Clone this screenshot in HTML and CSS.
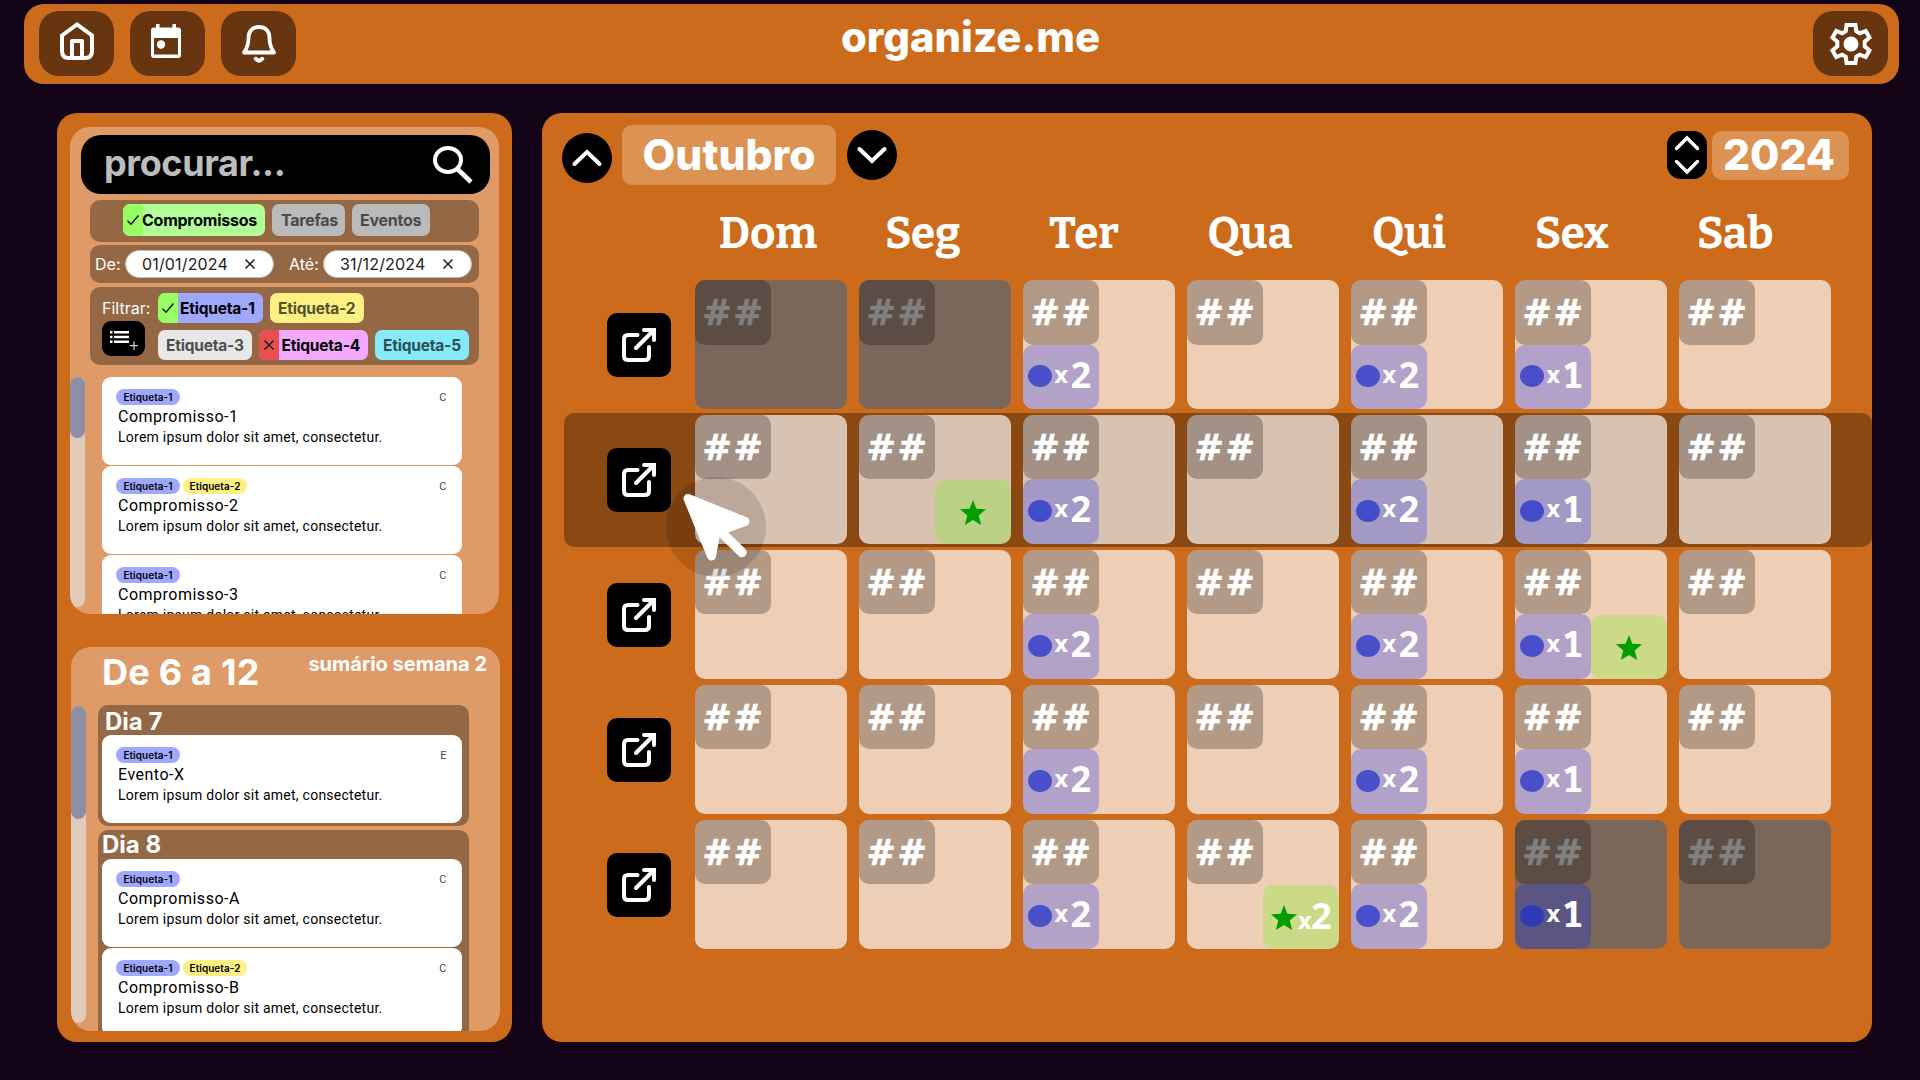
FILE: index.html
```html
<!DOCTYPE html>
<html lang="pt-BR">
<head>
<meta charset="utf-8">
<title>organize.me</title>
<link rel="stylesheet" href="styles.css">
</head>
<body>
<svg class="defs" aria-hidden="true">
  <symbol id="export" viewBox="0 0 64 64">
    <path d="M30.500 22H21Q17 22 17 26V43Q17 47 21 47H38Q42 47 42 43V34" fill="none" stroke="#fff" stroke-width="4" stroke-linecap="round" stroke-linejoin="round"/>
    <path d="M29 35L46 18" fill="none" stroke="#fff" stroke-width="4" stroke-linecap="round"/>
    <path d="M37 15H49V27Q49 29 47 29Q45 29 45 27V19H37Q35 19 35 17Q35 15 37 15Z" fill="#fff"/>
  </symbol>
  <symbol id="star" viewBox="0 0 26 25">
    <path d="M13 0L16.400 8.700L26 9.300L18.700 15.400L21.200 25L13 20L4.800 25L7.300 15.400L0 9.300L9.600 8.700Z" fill="#009e00"/>
  </symbol>
  <symbol id="check" viewBox="0 0 14 12">
    <path d="M1.500 6.800L5 10.300L12.500 1.500" fill="none" stroke="#111" stroke-width="1.400"/>
  </symbol>
  <symbol id="cross" viewBox="0 0 12 12">
    <path d="M1.500 1.500L10.500 10.500M10.500 1.500L1.500 10.500" fill="none" stroke="#1d1b20" stroke-width="1.500"/>
  </symbol>
</svg>

<header class="topbar">
  <nav class="nav">
    <button class="nav-btn" aria-label="Início"><svg width="34" height="38" viewBox="0 0 34 38"><path d="M2 13.500L17 2.500L32 13.500V29Q32 36 25 36H9Q2 36 2 29Z" fill="none" stroke="#fff" stroke-width="4"/><path d="M12 36V19H22V36" fill="none" stroke="#fff" stroke-width="4" stroke-linejoin="round"/></svg></button>
    <button class="nav-btn" aria-label="Calendário"><svg class="cal" width="30" height="34" viewBox="0 0 30 34"><path fill="#fff" fill-rule="evenodd" d="M5 0H8.500V3.500H21.500V0H25V3.500H27Q30 3.500 30 6.500V31Q30 34 27 34H3Q0 34 0 31V6.500Q0 3.500 3 3.500H5ZM3 14V30.500H27V14Z"/><circle cx="10" cy="20.500" r="4.200" fill="#fff"/></svg></button>
    <button class="nav-btn" aria-label="Notificações"><svg class="bell" width="34" height="38" viewBox="0 0 34 38"><path d="M2 27.500C6 22 6.500 18 6.500 13C6.500 6 10.500 2 17 2S27.500 6 27.500 13C27.500 18 28 22 32 27.500Z" fill="none" stroke="#fff" stroke-width="3.800" stroke-linejoin="round"/><path d="M13.800 33.800Q17 37.500 20.200 33.800" fill="none" stroke="#fff" stroke-width="4" stroke-linecap="round"/></svg></button>
  </nav>
  <h1 class="brand">organize.me</h1>
  <button class="nav-btn" aria-label="Configurações"><svg class="gear" width="42" height="42" viewBox="0 0 42 42"><path d="M16.600 2H25.400L26.300 8.300L29.800 10.300L35.700 7.900L39.500 14.500L34.700 18.700V23.300L39.500 27.500L35.700 34.100L29.800 31.700L26.300 33.700L25.400 40H16.600L15.700 33.700L12.200 31.700L6.300 34.100L2.500 27.500L7.300 23.300V18.700L2.500 14.500L6.300 7.900L12.200 10.300L15.700 8.300Z" fill="none" stroke="#fff" stroke-width="4"/><circle cx="21" cy="21" r="7.500" fill="#fff"/></svg></button>
</header>

<main class="layout">
  <aside class="sidebar">
    <section class="box search-box">
      <div class="search"><span>procurar...</span><svg width="40" height="38" viewBox="0 0 40 38"><ellipse cx="15" cy="14" rx="13" ry="12" fill="none" stroke="#fff" stroke-width="4"/><path d="M24.500 23L38 36" stroke="#fff" stroke-width="4.600"/></svg></div>
      <div class="filter types">
        <span class="chip on"><i class="mark ok"><svg width="14" height="12"><use href="#check"/></svg></i>Compromissos</span>
        <span class="chip off">Tarefas</span>
        <span class="chip off last">Eventos</span>
      </div>
      <div class="filter dates">
        <label>De:</label><span class="date">01/01/2024<svg width="12" height="12"><use href="#cross"/></svg></span>
        <label class="until">Até:</label><span class="date">31/12/2024<svg width="12" height="12"><use href="#cross"/></svg></span>
      </div>
      <div class="filter tags">
        <div class="tags-side"><label>Filtrar:</label><button class="add" aria-label="Adicionar etiqueta"><svg width="43" height="35" viewBox="0 0 43 35"><path d="M8 11.200H10.500M12 11.200H27M8 16H10.500M12 16H27M8 20.800H10.500M12 20.800H27" stroke="#fff" stroke-width="2.400"/><path d="M32 20.500V29M28 24.700H36" stroke="#ccc" stroke-width="1.300"/></svg></button></div>
        <div class="tags-list">
          <span class="chip blue"><i class="mark ok"><svg width="14" height="12"><use href="#check"/></svg></i>Etiqueta-1</span>
          <span class="chip yellow">Etiqueta-2</span>
          <span class="chip white">Etiqueta-3</span>
          <span class="chip pink"><i class="mark no"><svg width="12" height="12"><use href="#cross"/></svg></i>Etiqueta-4</span>
          <span class="chip cyan">Etiqueta-5</span>
        </div>
      </div>
      <div class="scroll results">
        <div class="track"><div class="thumb"></div></div>
        <div class="list">
          <article class="card"><div class="meta"><b class="tag t1">Etiqueta-1</b><em>C</em></div><h3>Compromisso-1</h3><p>Lorem ipsum dolor sit amet, consectetur.</p></article>
          <article class="card"><div class="meta"><b class="tag t1">Etiqueta-1</b><b class="tag t2">Etiqueta-2</b><em>C</em></div><h3>Compromisso-2</h3><p>Lorem ipsum dolor sit amet, consectetur.</p></article>
          <article class="card"><div class="meta"><b class="tag t1">Etiqueta-1</b><em>C</em></div><h3>Compromisso-3</h3><p>Lorem ipsum dolor sit amet, consectetur.</p></article>
        </div>
      </div>
    </section>

    <section class="box week-box">
      <div class="week-head"><h2>De 6 a 12</h2><span>sumário semana 2</span></div>
      <div class="scroll week">
        <div class="track"><div class="thumb"></div></div>
        <div class="days">
          <div class="day first"><h4>Dia 7</h4>
            <article class="card"><div class="meta"><b class="tag t1">Etiqueta-1</b><em>E</em></div><h3>Evento-X</h3><p>Lorem ipsum dolor sit amet, consectetur.</p></article>
          </div>
          <div class="day"><h4>Dia 8</h4>
            <article class="card"><div class="meta"><b class="tag t1">Etiqueta-1</b><em>C</em></div><h3>Compromisso-A</h3><p>Lorem ipsum dolor sit amet, consectetur.</p></article>
            <article class="card"><div class="meta"><b class="tag t1">Etiqueta-1</b><b class="tag t2">Etiqueta-2</b><em>C</em></div><h3>Compromisso-B</h3><p>Lorem ipsum dolor sit amet, consectetur.</p></article>
          </div>
        </div>
      </div>
    </section>
  </aside>

  <section class="calendar">
    <div class="cal-head">
      <button class="round up" aria-label="Mês anterior"><svg width="50" height="50" viewBox="0 0 50 50"><path d="M12.500 31L25 19L37.500 31" fill="none" stroke="#fff" stroke-width="4" stroke-linecap="round"/></svg></button>
      <div class="month">Outubro</div>
      <button class="round" aria-label="Próximo mês"><svg width="50" height="50" viewBox="0 0 50 50"><path d="M12.500 19L25 31L37.500 19" fill="none" stroke="#fff" stroke-width="4" stroke-linecap="round"/></svg></button>
      <button class="stepper" aria-label="Ano"><svg width="40" height="48" viewBox="0 0 40 48"><path d="M9.500 17.500L20 7L30.500 17.500M9.500 30.500L20 41L30.500 30.500" fill="none" stroke="#fff" stroke-width="3.400" stroke-linecap="round"/></svg></button>
      <div class="year">2024</div>
    </div>
    <div class="weekdays"><span>Dom</span><span>Seg</span><span>Ter</span><span>Qua</span><span>Qui</span><span>Sex</span><span>Sab</span></div>

    <div class="weeks">
      <div class="row">
        <button class="open" aria-label="Abrir semana 1"><svg width="64" height="64"><use href="#export"/></svg></button>
        <div class="cell out"><b class="num">##</b></div>
        <div class="cell out"><b class="num">##</b></div>
        <div class="cell"><b class="num">##</b><span class="ev"><i></i><small>x</small>2</span></div>
        <div class="cell"><b class="num">##</b></div>
        <div class="cell"><b class="num">##</b><span class="ev"><i></i><small>x</small>2</span></div>
        <div class="cell"><b class="num">##</b><span class="ev"><i></i><small>x</small>1</span></div>
        <div class="cell"><b class="num">##</b></div>
      </div>
      <div class="row current">
        <button class="open" aria-label="Abrir semana 2"><svg width="64" height="64"><use href="#export"/></svg></button>
        <div class="cell"><b class="num">##</b></div>
        <div class="cell"><b class="num">##</b><span class="fav"><svg width="26" height="25"><use href="#star"/></svg></span></div>
        <div class="cell"><b class="num">##</b><span class="ev"><i></i><small>x</small>2</span></div>
        <div class="cell"><b class="num">##</b></div>
        <div class="cell"><b class="num">##</b><span class="ev"><i></i><small>x</small>2</span></div>
        <div class="cell"><b class="num">##</b><span class="ev"><i></i><small>x</small>1</span></div>
        <div class="cell"><b class="num">##</b></div>
      </div>
      <div class="row">
        <button class="open" aria-label="Abrir semana 3"><svg width="64" height="64"><use href="#export"/></svg></button>
        <div class="cell"><b class="num">##</b></div>
        <div class="cell"><b class="num">##</b></div>
        <div class="cell"><b class="num">##</b><span class="ev"><i></i><small>x</small>2</span></div>
        <div class="cell"><b class="num">##</b></div>
        <div class="cell"><b class="num">##</b><span class="ev"><i></i><small>x</small>2</span></div>
        <div class="cell"><b class="num">##</b><span class="ev"><i></i><small>x</small>1</span><span class="fav"><svg width="26" height="25"><use href="#star"/></svg></span></div>
        <div class="cell"><b class="num">##</b></div>
      </div>
      <div class="row">
        <button class="open" aria-label="Abrir semana 4"><svg width="64" height="64"><use href="#export"/></svg></button>
        <div class="cell"><b class="num">##</b></div>
        <div class="cell"><b class="num">##</b></div>
        <div class="cell"><b class="num">##</b><span class="ev"><i></i><small>x</small>2</span></div>
        <div class="cell"><b class="num">##</b></div>
        <div class="cell"><b class="num">##</b><span class="ev"><i></i><small>x</small>2</span></div>
        <div class="cell"><b class="num">##</b><span class="ev"><i></i><small>x</small>1</span></div>
        <div class="cell"><b class="num">##</b></div>
      </div>
      <div class="row">
        <button class="open" aria-label="Abrir semana 5"><svg width="64" height="64"><use href="#export"/></svg></button>
        <div class="cell"><b class="num">##</b></div>
        <div class="cell"><b class="num">##</b></div>
        <div class="cell"><b class="num">##</b><span class="ev"><i></i><small>x</small>2</span></div>
        <div class="cell"><b class="num">##</b><span class="fav multi"><svg width="26" height="25"><use href="#star"/></svg><small>x</small>2</span></div>
        <div class="cell"><b class="num">##</b><span class="ev"><i></i><small>x</small>2</span></div>
        <div class="cell out"><b class="num">##</b><span class="ev"><i></i><small>x</small>1</span></div>
        <div class="cell out"><b class="num">##</b></div>
      </div>
    </div>
  </section>
</main>

<svg class="pointer" width="100" height="100" viewBox="0 0 100 100"><circle cx="50" cy="50" r="50" fill="#000" fill-opacity=".13"/><path d="M22 21.500L79 44.500L50 55L45.500 79Z" fill="#fff" stroke="#fff" stroke-width="9" stroke-linejoin="round"/><path d="M56 56L76 75.500" stroke="#fff" stroke-width="9.500" stroke-linecap="round"/></svg>
</body>
</html>
```
FILE: styles.css
```css
* { box-sizing: border-box; margin: 0; padding: 0; }

body {
  width: 1920px;
  height: 1080px;
  overflow: hidden;
  padding: 4px 21px 38px 24px;
  background: #120416;
  color: #fff;
  font-family: Inter, "Liberation Sans", sans-serif;
}

.defs { display: none; }
svg { display: block; flex: none; }
button { border: 0; background: none; flex: none; }

/* top bar */
.topbar {
  height: 80px;
  padding: 7px 11px 0 15px;
  display: flex;
  border-radius: 20px;
  background: #cc6b1c;
}
.nav { display: flex; gap: 16px; width: 257px; }
.nav-btn {
  width: 75px;
  height: 65px;
  display: flex;
  align-items: center;
  justify-content: center;
  border-radius: 20px;
  background: #67350f;
}
.nav-btn svg { margin-bottom: 5px; }
.nav-btn .bell { margin-bottom: 0; }
.nav-btn .cal { margin-bottom: 6px; margin-right: 3px; }
.nav-btn .gear { margin-bottom: 0; }
.brand { flex: 1; padding-right: 168px; text-align: center; font-size: 41.800px; font-weight: 800; line-height: 52px; }

.layout { display: flex; gap: 30px; margin: 29px 27px 0 33px; height: 929px; }

/* sidebar */
.sidebar {
  width: 455px;
  padding: 14px 12px 0 13px;
  border-radius: 20px;
  background: #cc6b1c;
  flex: none;
}
.box { width: 429px; overflow: hidden; border-radius: 20px; background: #de9b68; }
.search-box { height: 487px; padding-top: 8px; }
.week-box { height: 384px; margin: 33px 0 0 1px; }

.search {
  height: 59px;
  margin: 0 9px 6px 11px;
  padding: 0 17px 0 23px;
  display: flex;
  align-items: center;
  justify-content: space-between;
  border-radius: 20px;
  background: #000;
  color: #bdbdbd;
  font-size: 36px;
  font-weight: 700;
  line-height: 56px;
  letter-spacing: -.400px;
}
.search span { margin-top: -3px; }

.filter { width: 389px; margin-left: 20px; display: flex; border-radius: 10px; background: #946844; }
.types { height: 42px; padding: 4px 0 0 33px; gap: 7px; margin-bottom: 3px; }
.dates { height: 38px; padding: 5px 0 0 5px; margin-bottom: 4px; font-size: 16px; line-height: 28px; }
.tags { height: 78px; padding: 6px 0 0 12px; margin-bottom: 12px; }

.chip {
  height: 30px;
  padding: 0 8px;
  display: flex;
  border-radius: 7px;
  overflow: hidden;
  font-size: 15.500px;
  font-weight: 700;
  line-height: 31px;
  letter-spacing: -.200px;
  white-space: nowrap;
}
.types .chip { height: 32px; font-size: 16px; line-height: 33px; letter-spacing: -.250px; }
.mark { width: 20px; display: flex; align-items: center; justify-content: center; margin-left: -8px; margin-right: 2px; }
.ok { background: #97ff64; }
.no { background: #e94f4f; }
.on { width: 142px; background: #b1ff96; color: #000; }
.on .mark { margin-right: -1px; }
.off { width: 73px; padding-left: 9px; background: #bababa; color: #4a4a4a; }
.last { width: 78px; padding-left: 8px; }

.dates label { width: 30px; }
.dates .until { width: 34px; margin-left: 15px; }
.date {
  width: 149px;
  height: 28px;
  padding: 0 17px 0 16px;
  display: flex;
  align-items: center;
  justify-content: space-between;
  border: 1px solid #cabcb0;
  border-radius: 14px;
  background: #fff;
  color: #1d1b20;
  font-size: 16px;
  letter-spacing: .150px;
}

.tags-side { width: 56px; font-size: 16px; line-height: 28px; }
.tags-side label { display: block; height: 28px; line-height: 31px; }
.add { display: block; width: 43px; height: 35px; border-radius: 9px; background: #000; }
.tags-list { display: flex; flex-wrap: wrap; gap: 7px; align-content: flex-start; width: 315px; }
.blue { width: 105px; background: #9fa8ff; color: #000; }
.yellow { width: 94px; background: #fff083; color: #57522d; margin-right: 90px; }
.white { width: 94px; background: #e7e7e7; color: #4e4e4e; }
.pink { width: 109px; background: #f2a9ff; color: #000; }
.pink .mark { margin-right: 3px; }
.cyan { width: 94px; background: #85ebf9; color: #2d5055; }

/* scrolling lists */
.scroll { display: flex; }
.track { width: 15px; border-radius: 8px; background: #e0cbba; flex: none; }
.thumb { border-radius: 8px; background: #8e8ea5; }
.results { gap: 17px; }
.results .track { height: 230px; }
.results .thumb { height: 61px; }
.week .track { height: 317px; margin-top: 1px; }
.week .thumb { height: 113px; }
.list { width: 360px; }

.card { height: 88px; margin-bottom: 1px; padding: 12px 14px 0; border-radius: 9px; background: #fff; color: #000; font-family: Roboto, sans-serif; }
.meta { display: flex; gap: 3px; }
.tag { width: 64px; height: 16px; border-radius: 8px; text-align: center; font: 600 10px/17px Inter, sans-serif; letter-spacing: .050px; }
.t1 { background: #9fa8ff; }
.t2 { background: #fff083; }
.meta em { margin-left: auto; margin-right: 1px; color: #49454f; font-size: 11px; font-style: normal; line-height: 17px; height: 16px; letter-spacing: .5px; }
.card h3 { margin-left: 2px; font-size: 16px; font-weight: 400; line-height: 23px; letter-spacing: .5px; }
.card p { margin: -1px 0 0 2px; font-size: 14px; line-height: 20px; letter-spacing: .25px; white-space: nowrap; }

.week-head { height: 58px; padding: 5px 13px 0 31px; display: flex; justify-content: space-between; }
.week-head h2 { font-size: 36px; font-weight: 700; line-height: 40px; letter-spacing: .250px; }
.week-head span { font-size: 20px; font-weight: 700; line-height: 25px; }
.week { gap: 12px; }
.days { width: 371px; }
.day { margin-bottom: 4px; padding: 0 7px 2px 4px; border-radius: 10px; background: #946844; }
.day h4 { height: 29px; font-size: 24px; font-weight: 700; line-height: 29px; }
.first h4 { height: 30px; line-height: 33px; padding-left: 3px; }

/* calendar */
.calendar { width: 1330px; border-radius: 20px; background: #cc6b1c; flex: none; }
.cal-head { height: 72px; padding: 12px 23px 0 20px; display: flex; }
.round { width: 50px; height: 50px; margin-top: 5px; border-radius: 50%; background: #000; }
.round.up { margin-top: 8px; }
.month {
  width: 214px;
  height: 60px;
  margin: 0 11px 0 10px;
  border-radius: 10px;
  background: #db9253;
  text-align: center;
  font-size: 42.500px;
  font-weight: 800;
  line-height: 59px;
}
.stepper { width: 40px; height: 48px; margin: 6px 5px 0 auto; border-radius: 14px; background: #000; }
.year { width: 137px; height: 49px; margin-top: 6px; padding-right: 3px; border-radius: 10px; background: #db9253; text-align: center; font-size: 42.500px; font-weight: 800; line-height: 48px; }

.weekdays {
  height: 95px;
  padding: 18px 0 0 150px;
  display: grid;
  grid-template-columns: 152px 157.400px 165.200px 166.800px 151.200px 174.400px 152.600px;
  text-align: center;
  font: 700 44px/62px Bitter, "DejaVu Serif Condensed", "DejaVu Serif", serif;
}

.row {
  height: 135px;
  margin-left: 22px;
  padding: 1px 0 0 43px;
  display: flex;
  border-radius: 10px;
}
.weeks { margin-top: -1px; }
.current { height: 134px; margin-top: -1px; margin-bottom: 1.500px; padding-top: 1.500px; background: #8a4813; }
.open { width: 64px; height: 64px; margin: 33px 24px 0 0; border-radius: 10px; background: #000; }
.cell {
  width: 152px;
  height: 129px;
  margin-right: 12px;
  display: grid;
  grid-template: 64.500px 64.500px / 76px 76px;
  border-radius: 10px;
  background: rgba(255, 255, 255, .67);
}
.num, .ev, .fav { border-radius: 10px; font-weight: 700; }
.num {
  padding-left: 7.600px;
  background: rgba(0, 0, 0, .25);
  font-family: "DejaVu Sans", sans-serif;
  font-size: 35px;
  line-height: 67px;
  letter-spacing: 1.600px;
  -webkit-text-stroke: .700px currentColor;
}
.ev, .fav { grid-row: 2; display: flex; align-items: flex-start; font-family: "Noto Sans Mono", "Noto Sans CJK JP", monospace; font-size: 36px; line-height: 60px; }
.ev small, .fav small { font-size: 24px; }
.ev { padding-left: 5px; background: rgba(0, 30, 255, .25); }
.ev i { width: 24px; height: 22px; margin-top: 20.500px; border-radius: 50%; background: rgba(32, 47, 203, .72); }
.ev small { width: 18px; padding-left: 2px; line-height: 57px; }
.fav { grid-column: 2; justify-content: center; margin-top: 1px; background: rgba(100, 255, 0, .25); }
.fav svg { margin-top: 19.500px; }
.fav.multi { justify-content: flex-start; padding-left: 8px; line-height: 61px; }
.multi svg { margin-top: 20px; }
.multi small { width: 13.500px; padding-left: .500px; line-height: 70px; }
.out { background: #7a675a; }
.out .num { color: #808080; }

.pointer { position: absolute; left: 666px; top: 477px; }
```
